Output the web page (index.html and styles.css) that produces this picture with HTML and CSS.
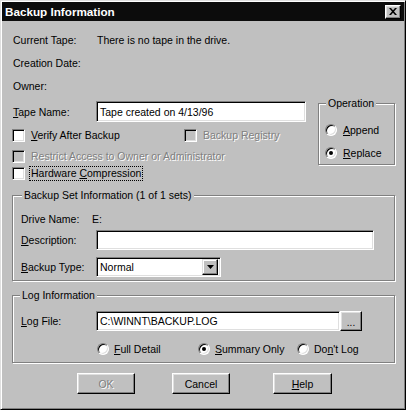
FILE: index.html
```html
<!DOCTYPE html>
<html>
<head>
<meta charset="utf-8">
<link rel="stylesheet" href="styles.css">
</head>
<body>
<div class="window">
  <div class="titlebar">
    <span class="title">Backup Information</span>
    <span class="close"><svg width="8" height="7" viewBox="0 0 8 7"><path d="M0 0h2l2 2.2L6 0h2L5 3.5 8 7H6L4 4.8 2 7H0l3-3.5z" fill="#000"/></svg></span>
  </div>
  <div class="content">
    <div class="info-row"><span class="lbl">Current Tape:</span><span>There is no tape in the drive.</span></div>
    <div class="info-row"><span class="lbl">Creation Date:</span></div>
    <div class="info-row"><span class="lbl">Owner:</span></div>

    <div class="top">
      <div class="left">
        <div class="tape-row">
          <span class="lbl"><u>T</u>ape Name:</span>
          <div class="textbox tape-box">Tape created on 4/13/96</div>
        </div>
        <div class="check-row r1">
          <div class="check-item w1"><span class="check"></span><span class="ctext"><u>V</u>erify After Backup</span></div>
          <div class="check-item"><span class="check disabled"></span><span class="ctext dis">Backup Registry</span></div>
        </div>
        <div class="check-row r2">
          <div class="check-item"><span class="check disabled"></span><span class="ctext dis">Restrict Access to Owner or Administrator</span></div>
        </div>
        <div class="check-row r3">
          <div class="check-item"><span class="check"></span><span class="ctext focus">Hardware <u>C</u>ompression</span></div>
        </div>
      </div>
      <div class="group op">
        <span class="legend">Operation</span>
        <div class="radio-row"><span class="radio"></span><span><u>A</u>ppend</span></div>
        <div class="radio-row r-second"><span class="radio on"></span><span><u>R</u>eplace</span></div>
      </div>
    </div>

    <div class="group bset">
      <span class="legend bl">Backup Set Information (1 of 1 sets)</span>
      <div class="g-row"><span class="lbl">Drive Name:</span><span class="drive">E:</span></div>
      <div class="g-row desc"><span class="lbl"><u>D</u>escription:</span><div class="textbox desc-box"></div></div>
      <div class="g-row type"><span class="lbl"><u>B</u>ackup Type:</span>
        <div class="textbox combo"><span>Normal</span><span class="drop"><svg width="7" height="4" viewBox="0 0 7 4"><path d="M0 0h7L3.5 4z" fill="#000"/></svg></span></div>
      </div>
    </div>

    <div class="group log">
      <span class="legend">Log Information</span>
      <div class="g-row"><span class="lbl"><u>L</u>og File:</span><div class="textbox log-box">C:\WINNT\BACKUP.LOG</div><span class="btn dots">...</span></div>
      <div class="g-row radios">
        <div class="radio-row ri1"><span class="radio"></span><span><u>F</u>ull Detail</span></div>
        <div class="radio-row ri2"><span class="radio on"></span><span><u>S</u>ummary Only</span></div>
        <div class="radio-row"><span class="radio"></span><span>Do<u>n</u>'t Log</span></div>
      </div>
    </div>

    <div class="buttons">
      <span class="btn push ok dis">OK</span>
      <span class="btn push cancel">Cancel</span>
      <span class="btn push help"><u>H</u>elp</span>
    </div>
  </div>
</div>
</body>
</html>
```

FILE: styles.css
```css
* { box-sizing: border-box; }
body {
  margin: 0;
  font-family: "Liberation Sans", Arial, sans-serif;
  font-size: 10.5px;
  color: #000;
  background: #c0c0c0;
}
u { text-decoration: underline; text-underline-offset: 1px; }

.window {
  width: 406px;
  height: 410px;
  background: #c0c0c0;
  border: 1px solid;
  border-color: #dfdfdf #000 #000 #dfdfdf;
  box-shadow: inset 1px 1px 0 #fff, inset -1px -1px 0 #808080;
  padding: 1px;
}

.titlebar {
  height: 19px;
  background: #0c0c0c;
  display: flex;
  align-items: center;
  justify-content: space-between;
  padding: 0 3px 0 3px;
}
.title {
  color: #fff;
  font-weight: bold;
  font-size: 11.7px;
}
.close {
  width: 16px;
  height: 14px;
  background: #c0c0c0;
  border: 1px solid;
  border-color: #fff #000 #000 #fff;
  box-shadow: inset -1px -1px 0 #808080, inset 1px 1px 0 #dfdfdf;
  display: flex;
  align-items: center;
  justify-content: center;
}

.content { padding: 7px 9px 0 10px; }

.info-row { display: flex; align-items: center; height: 23px; }
.info-row .lbl { width: 85px; padding-left: 1px; }

.top { display: flex; align-items: flex-start; }
.left { width: 294px; }
.tape-row { display: flex; align-items: center; height: 21px; margin-top: 4px; }
.tape-row .lbl { width: 84px; padding-left: 1px; }
.tape-box { width: 210px; height: 21px; }

.textbox {
  background: #fff;
  border: 1px solid;
  border-color: #808080 #fff #fff #808080;
  box-shadow: inset 1px 1px 0 #000, inset -1px -1px 0 #dfdfdf;
  padding-left: 3px;
  display: flex;
  align-items: center;
}

.check-row { display: flex; align-items: center; height: 13px; line-height: 13px; }
.r1 { margin-top: 7px; }
.r2 { margin-top: 8px; }
.r3 { margin-top: 4px; }
.check-item { display: flex; align-items: center; }
.w1 { width: 172px; }
.check {
  width: 13px;
  height: 13px;
  background: #fff;
  border: 1px solid;
  border-color: #808080 #fff #fff #808080;
  box-shadow: inset 1px 1px 0 #000, inset -1px -1px 0 #dfdfdf;
  flex: none;
}
.check.disabled { background: #c0c0c0; }
.ctext { margin-left: 6px; }
.dis { color: #808080; text-shadow: 1px 1px 0 #fff; }
.ctext.focus {
  margin-left: 4px;
  border: 1px dotted #000;
  padding: 0 1px;
  line-height: 13px;
}

.group {
  position: relative;
  border: 1px solid #808080;
  box-shadow: inset 1px 1px 0 #fff, 1px 1px 0 #fff;
}
.legend {
  position: absolute;
  top: -7px;
  left: 7px;
  padding: 0 2px;
  background: #c0c0c0;
  line-height: 13px;
  white-space: nowrap;
}
.legend.bl { left: 9px; }

.op {
  width: 77px;
  height: 62px;
  margin-top: 6px;
  margin-left: 12px;
  padding: 19px 0 0 6px;
}
.radio-row { display: flex; align-items: center; height: 13px; }
.r-second { margin-top: 10px; }
.radio {
  width: 12px;
  height: 12px;
  border-radius: 50%;
  background: #fff;
  border: 1px solid;
  border-color: #808080 #fff #fff #808080;
  box-shadow: inset 1px 1px 0 #000, inset -1px -1px 0 #dfdfdf;
  margin-right: 6px;
  flex: none;
  display: flex;
  align-items: center;
  justify-content: center;
}
.radio.on::after {
  content: "";
  width: 4px;
  height: 4px;
  border-radius: 50%;
  background: #000;
}

.bset {
  margin-top: 15px;
  height: 86px;
  padding: 13px 8px 0 8px;
}
.g-row { display: flex; align-items: center; height: 20px; }
.g-row .lbl { width: 75px; }
.drive { margin-left: -4px; }
.desc { margin-top: 1px; }
.desc-box { width: 278px; height: 20px; }
.type { margin-top: 7px; }
.combo { width: 125px; height: 20px; padding-right: 2px; }
.drop {
  margin-left: auto;
  width: 16px;
  height: 16px;
  background: #c0c0c0;
  border: 1px solid;
  border-color: #dfdfdf #000 #000 #dfdfdf;
  box-shadow: inset -1px -1px 0 #808080, inset 1px 1px 0 #fff;
  display: flex;
  align-items: center;
  justify-content: center;
}

.log {
  margin-top: 14px;
  height: 68px;
  padding: 15px 8px 0 8px;
}
.log-box { width: 244px; height: 20px; }
.btn {
  background: #c0c0c0;
  border: 1px solid;
  border-color: #fff #000 #000 #fff;
  box-shadow: inset -1px -1px 0 #808080, inset 1px 1px 0 #dfdfdf;
  display: flex;
  align-items: center;
  justify-content: center;
}
.dots { width: 22px; height: 20px; font-size: 10px; padding-top: 2px; }
.radios { margin-top: 8px; padding-left: 76px; }
.radios .radio { margin-right: 5px; }
.ri1 { width: 101px; }
.ri2 { width: 99px; }

.buttons { display: flex; margin-top: 10px; }
.push { width: 58px; height: 21px; }
.ok { margin-left: 65px; }
.cancel { margin-left: 37px; }
.help { margin-left: 43px; width: 59px; }
```
